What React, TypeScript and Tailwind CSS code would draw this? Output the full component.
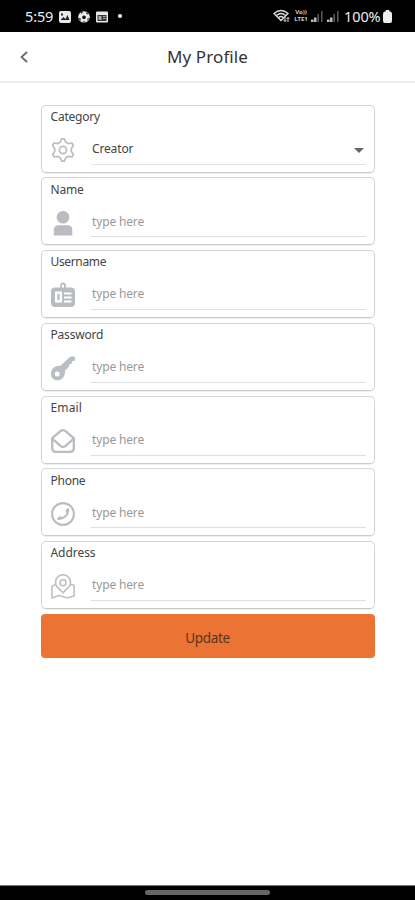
import React from "react";

type IconProps = { children: React.ReactNode; color?: string };

function Glyph({ children, color = "#b9bcc0" }: IconProps) {
  return (
    <svg className="block h-6 w-6 overflow-visible" viewBox="0 0 24 24" fill="none" stroke={color} strokeWidth="2" strokeLinejoin="round" strokeLinecap="round">
      {children}
    </svg>
  );
}

const GearIcon = () => (
  <Glyph color="#bdbdbd">
    <path strokeWidth="1.7" d="M9.300 4.200 10.600.9h2.800l1.300 3.300 2.400 1.400 3.800-.6 1.500 2.500-2.100 3v3l2.100 3-1.500 2.500-3.800-.6-2.400 1.400-1.300 3.300h-2.800l-1.300-3.300-2.400-1.400-3.800.6-1.500-2.500 2.100-3v-3l-2.100-3L3.100 5l3.800.6Z" />
    <circle cx="12" cy="12" r="3.6" strokeWidth="1.700" />
  </Glyph>
);
const UserIcon = () => (
  <Glyph>
    <g fill="#b9bcc0" stroke="none">
      <circle cx="12" cy="6.300" r="6.300" />
      <path d="M2.800 24.500V19q0-4.800 5-4.800h8.500q5 0 5 4.800v5.500Z" />
    </g>
  </Glyph>
);
const BadgeIcon = () => (
  <Glyph>
    <path fill="#b9bcc0" stroke="none" fillRule="evenodd" d="M4 4.500h16q4 0 4 4V20q0 4-4 4H4q-4 0-4-4V8.500q0-4 4-4ZM4 8.500v11h7v-11ZM13 9.500v2h7.500v-2ZM13 13.500v2h7.500v-2ZM13 17.500v2h7.500v-2Z" />
    <path d="M10 5V2.500a2 2 0 0 1 4 0V5" strokeWidth="1.800" />
    <path d="M7.500 12v4" strokeWidth="2.400" />
  </Glyph>
);
const KeyIcon = () => (
  <Glyph color="#b9bec6">
    <path fill="#b9bec6" stroke="none" fillRule="evenodd" d="M9.500 9.800 18.600 1.200Q19.500.5 20.700.5H23q1 0 1 1v3.200l-2.800.4-.5 2.600-2.500.7-.4 2.500-3.800 3.500q.3 5.700-3 8.300c-3.100 2.500-7.600 2-9.700-.8-2.200-3-1.600-8.100 1.800-10.600q2.700-2 6.400-1.500ZM6.200 15.500a2.500 2.500 0 1 0 .01 5A2.500 2.500 0 0 0 6.200 15.500Z" />
  </Glyph>
);
const MailIcon = () => (
  <Glyph>
    <path strokeWidth="2.300" d="m1.200 9.200 8.600-7.300q2.200-1.600 4.400 0l8.600 7.300v10q0 3.600-3.600 3.600H4.800q-3.600 0-3.600-3.600Z" />
    <path strokeWidth="2.300" d="m1.600 9.800 8.100 7.400q2.300 1.700 4.600 0l8.100-7.400" />
  </Glyph>
);
const PhoneIcon = () => (
  <Glyph>
    <circle cx="12" cy="12" r="10.900" strokeWidth="2.100" />
    <path strokeWidth="1.900" d="M17.300 7.200c.5 5.300-4.600 10.300-10.200 9.700M17.200 7l-1.800 1.500.8 2.200M7 16.900l1.800-1.700 2.200 1" />
  </Glyph>
);
const MapIcon = () => (
  <Glyph color="#b9bec3">
    <g transform="translate(0 .9)">
      <path strokeWidth="1.600" d="M12 17.800 6.300 12.200a7.500 7.500 0 1 1 11.400 0Z" />
      <circle cx="12" cy="7.800" r="3" strokeWidth="1.600" />
      <path strokeWidth="1.500" d="M4.200 9.800.9 11.400v11.800l7-2.600 8.200 2.400 7-1.900V10.300l-3.300-.6" />
    </g>
  </Glyph>
);

const fields = [
  { label: "Category", Icon: GearIcon, w: "tracking-[-0.2px]" },
  { label: "Name", Icon: UserIcon, w: "tracking-[-0.15px]" },
  { label: "Username", Icon: BadgeIcon, w: "tracking-[-0.35px]" },
  { label: "Password", Icon: KeyIcon, w: "tracking-[-0.2px]" },
  { label: "Email", Icon: MailIcon, w: "tracking-[0.15px]" },
  { label: "Phone", Icon: PhoneIcon, w: "tracking-[-0.25px]" },
  { label: "Address", Icon: MapIcon, w: "tracking-[-0.05px]" },
];

function Signal() {
  return (
    <svg className="block h-3 w-3" viewBox="0 0 12 12">
      <path fill="#bbb" d="M0 9.500h2.500V12H0zM3 7.500h2.500V12H3z" />
      <path fill="#5c5c5c" d="M6.500 4H8v8H6.500zM10 1h1.500v11H10z" />
    </svg>
  );
}

function StatusBar() {
  return (
    <div className="flex h-8 shrink-0 items-center bg-black pl-[25px] pr-[23px] text-[#eee]">
      <span className="w-[29px] whitespace-nowrap text-[14.500px] leading-4 tracking-[-0.150px]">5:59</span>
      <svg className="ml-[5px] mt-px h-3 w-3" viewBox="0 0 12 12">
        <rect width="12" height="12" rx="2" fill="#e8e8e8" />
        <path d="m1.500 9 3-3 2 2 2-4 2 5Z" fill="#222" />
        <path d="M2 2.500h2v2H2z" fill="#222" />
      </svg>
      <svg className="ml-[7px] mt-px h-3 w-3" viewBox="0 0 12 12">
        <circle cx="6" cy="6" r="5.800" fill="#e8e8e8" />
        <path d="m6 4.200 2 1.500-.8 2.400H4.800L4 5.700ZM3 .8l2 .9L3.300 3ZM9 1l-1 1.400 2.200 1.300ZM.5 7l2.300.5-.5 2.500ZM11.500 7l-2.200.8.300 2ZM4.500 10.500h3L6 11.800Z" fill="#111" />
      </svg>
      <svg className="ml-[6px] mt-px h-3 w-3" viewBox="0 0 12 12">
        <rect y=".5" width="12" height="11" rx="1" fill="#e8e8e8" />
        <path d="M1.500 4h9v6h-9Z" fill="#333" />
        <path d="M2.500 5h3v4h-3zM7 5h2.500v1H7zM7 7h2.500v1H7z" fill="#aaa" />
      </svg>
      <span className="ml-[10px] h-1 w-1 rounded-xs bg-white" />
      <svg className="ml-auto h-[14px] w-[17px]" viewBox="0 0 17 14" fill="none" stroke="#ddd" strokeWidth="1.300">
        <path d="M1 4.500q7-6 14 0L8 11.500ZM3.500 6.500q4.500-4 9 0M5.700 8.500q2.300-2 4.600 0" />
        <path d="M12 8v4.500m-1.400-1.300L12 12.600l1.400-1.400M15 13V8.500m-1.400 1.300L15 8.400l1.400 1.400" strokeWidth="1" />
      </svg>
      <span className="ml-[3px] flex w-4 flex-col items-center text-[6px] font-bold leading-none text-[#ccc]">
        <span className="h-[7px] leading-[7px]">Vo))</span>
        <span className="h-[7px] leading-[7px]">LTE1</span>
      </span>
      <span className="ml-[2px]"><Signal /></span>
      <span className="ml-[4px]"><Signal /></span>
      <span className="ml-[5px] w-[39px] whitespace-nowrap text-[14.500px] leading-4 tracking-[-0.100px]">100%</span>
      <svg className="h-[13px] w-[9px]" viewBox="0 0 10 13" preserveAspectRatio="none">
        <path d="M3 0h4v1.500h1Q10 1.500 10 4v6.500q0 2.500-2 2.500H2q-2 0-2-2.500V4q0-2.500 2-2.500h1Z" fill="#eee" />
      </svg>
    </div>
  );
}

export default function App() {
  return (
    <div className="flex h-[900px] w-[415px] flex-col overflow-hidden bg-white font-['Noto_Sans',sans-serif]">
      <StatusBar />
      <header className="grid h-[51px] shrink-0 grid-cols-[48px_1fr_48px] items-center border-b-2 border-[#ededed]">
        <svg className="ml-[20px] h-3 w-2" viewBox="0 0 8 12" fill="none" stroke="#666" strokeWidth="1.700">
          <path d="M7 1 1.500 6 7 11" />
        </svg>
        <h1 className="text-center text-[17px] leading-6 tracking-[0.1px] text-[#333]">My Profile</h1>
      </header>
      <main className="flex flex-1 flex-col px-[40.500px] pt-[21.500px]">
        <div className="flex flex-col gap-[4.750px]">
          {fields.map(({ label, Icon, w }, i) => (
            <section key={label} className="flex h-[68px] flex-col rounded-[5px] border border-[#d3d4d6] border-b-[#c8c9cc] shadow-[0_1px_1px_#00000012]">
              <label className={"ml-[9px] mt-[3.250px] h-4 self-start text-[12px] leading-4 text-[#444] " + w}>{label}</label>
              <div className="flex pl-[9px] pr-[8px]">
                <div className="mt-[13px] h-6 w-6"><Icon /></div>
                <div className={"ml-[16px] flex h-[39.750px] flex-1 items-center justify-between border-b pl-[1.500px] pr-[2px] text-[12px] tracking-[-0.150px] " + (i === 0 ? "border-[#e4e4e4] text-[#444]" : "border-[#dedfe1] text-[#999]")}>
                  <span className="mt-[9.500px] leading-4">{i === 0 ? "Creator" : "type here"}</span>
                  {i === 0 && (
                    <svg className="mt-[12px] h-[5px] w-[10px]" viewBox="0 0 10 5"><path d="M0 0h10L5 5Z" fill="#666" /></svg>
                  )}
                </div>
              </div>
            </section>
          ))}
        </div>
        <button className="mt-[5px] flex h-[44px] items-center justify-center rounded-[4px] bg-[#eb7434] pt-[4px] text-[13.500px] tracking-[-0.300px] text-[#58351f]">Update</button>
      </main>
      <footer className="flex h-[15px] shrink-0 justify-center border-t border-[#777] bg-black pt-[4px]">
        <span className="h-[5px] w-[125px] rounded-full bg-[#666]" />
      </footer>
    </div>
  );
}
